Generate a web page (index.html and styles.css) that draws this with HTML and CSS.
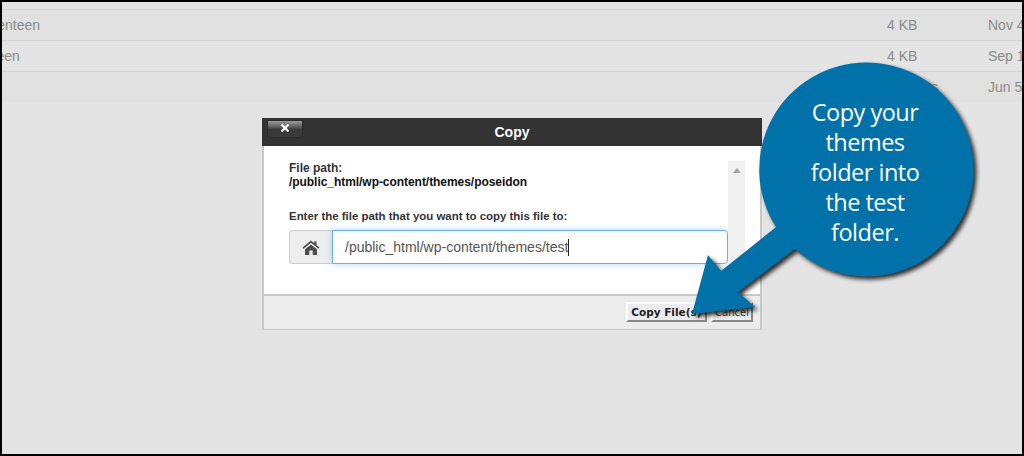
FILE: index.html
```html
<!DOCTYPE html>
<html lang="en">
<head>
<meta charset="utf-8">
<title>Copy</title>
<link rel="stylesheet" href="styles.css">
</head>
<body>
<div class="frame">
  <div class="table">
    <div class="row row-sliver"></div>
    <div class="row row-dark">
      <div class="name">twentyseventeen</div>
      <div class="size">4 KB</div>
      <div class="date">Nov 4</div>
    </div>
    <div class="row">
      <div class="name">twentysixteen</div>
      <div class="size">4 KB</div>
      <div class="date">Sep 1</div>
    </div>
    <div class="row row-dark row-last">
      <div class="name"></div>
      <div class="size size-bytes">4 bytes</div>
      <div class="date">Jun 5</div>
    </div>
  </div>
  <div class="dialog-wrap">
    <div class="dialog">
      <header class="dialog-head">
        <button class="close" type="button">
          <svg width="10" height="8" viewBox="0 0 10 8"><path d="M1.500 0.500L8.500 7.500M8.500 0.500L1.500 7.500" stroke="#fff" stroke-width="2.200" fill="none"/></svg>
        </button>
        <h1 class="dialog-title">Copy</h1>
      </header>
      <div class="dialog-body">
        <div class="body-main">
          <p class="path-label">File path:</p>
          <p class="path-value">/public_html/wp-content/themes/poseidon</p>
          <p class="enter-label">Enter the file path that you want to copy this file to:</p>
          <div class="input-group">
            <span class="addon">
              <svg width="18" height="15" viewBox="0 0 18 15"><path d="M9 0.500L0.500 7.500L1.500 8.800L9 2.800L16.500 8.800L17.500 7.500L14.500 5V1.200H12.300V3.200ZM3 9.300V15H7.300V10.500H10.700V15H15V9.300L9 4.400Z" fill="#4d4d4d"/></svg>
            </span>
            <div class="field">/public_html/wp-content/themes/test<i class="caret"></i></div>
          </div>
        </div>
        <div class="scrollbar"><span class="scroll-up"></span></div>
      </div>
      <footer class="dialog-foot">
        <button class="btn" type="button">Copy File(s)</button>
        <button class="btn btn-cancel" type="button">Cancel</button>
      </footer>
    </div>
  </div>
  <div class="callout">
    <svg class="callout-art" width="310" height="280" viewBox="680 55 310 280">
      <path d="M865.700 62.500A107 107 0 1 1 795 249L738 292L755 307L692 314L708 255L721 271L776 227A107 107 0 0 1 865.700 62.500Z" fill="#0071a9"/>
    </svg>
    <p class="callout-text">Copy your<br>themes<br>folder into<br>the test<br>folder.</p>
  </div>
</div>
</body>
</html>
```
FILE: styles.css
```css
* { box-sizing: border-box; }
html, body { margin: 0; padding: 0; }
body { width: 1024px; height: 456px; overflow: hidden; background: #000; font-family: "Liberation Sans", Arial, sans-serif; }
.frame { position: relative; width: 1020px; height: 452px; margin: 2px; background: #e4e4e4; overflow: hidden; }
.table { display: flex; flex-direction: column; }
.row { display: flex; height: 31px; padding-top: 5px; border-bottom: 1px solid #d4d4d4; font-size: 14px; line-height: 20px; color: #8a8a8a; }
.row-sliver { height: 8px; padding: 0; }
.row-dark { background: #e1e1e1; }
.row-last { border-bottom: 0; height: 30px; }
.name { width: 952px; margin-left: -67px; flex: none; white-space: nowrap; }
.size { width: 101px; flex: none; white-space: nowrap; }
.size-bytes { padding-left: 6px; }
.date { white-space: nowrap; }
.dialog-wrap { display: flex; justify-content: center; padding-top: 16px; }
.dialog { width: 500px; height: 212px; display: flex; flex-direction: column; border: 2px solid #c8c8c8; border-top: 0; background: #fff; }
.dialog-head { position: relative; height: 28px; margin: 0 -2px; background: #333; display: flex; align-items: center; justify-content: center; flex: none; }
.dialog-title { margin: 0; font-size: 14px; font-weight: bold; color: #fff; line-height: 28px; }
.close { position: absolute; left: 6px; top: 3px; width: 34px; height: 16px; padding: 3px 0 0; border: 0; border-radius: 0 0 4px 4px; background: linear-gradient(#9a9a9a, #5a5a5a 40%, #3a3a3a 50%, #3a3a3a); box-shadow: 0 0 0 1px #2a2a2a; display: flex; align-items: flex-start; justify-content: center; }
.dialog-body { flex: 1; display: flex; padding: 15px 15px 0 25px; }
.body-main { width: 439px; flex: none; }
.path-label, .path-value, .enter-label { margin: 0; font-size: 12px; line-height: 14px; font-weight: bold; }
.path-label { color: #333; }
.path-value { color: #111; letter-spacing: -.05px; }
.enter-label { color: #333; margin-top: 20px; font-size: 11.450px; }
.input-group { display: flex; height: 34px; margin-top: 7px; }
.addon { width: 43px; flex: none; display: flex; align-items: center; justify-content: center; background: #eee; border: 1px solid #ccc; border-right: 0; border-radius: 4px 0 0 4px; }
.field { flex: 1; display: flex; align-items: center; padding-left: 12px; font-size: 14px; color: #555; border: 1px solid #66afe9; border-radius: 0 4px 4px 0; background: #fff; box-shadow: 0 0 6px rgba(102, 175, 233, .5); }
.caret { display: block; width: 1px; height: 17px; background: #222; }
.scrollbar { width: 17px; height: 133px; flex: none; background: #f1f1f1; display: flex; justify-content: center; padding-top: 7px; }
.scroll-up { width: 0; height: 0; border-left: 4px solid transparent; border-right: 4px solid transparent; border-bottom: 5px solid #a3a3a3; }
.dialog-foot { height: 35px; flex: none; background: #ececec; border-top: 2px solid #c8c8c8; display: flex; justify-content: flex-end; align-items: flex-start; gap: 4px; padding: 6px 7px 0 0; }
.btn { height: 20px; padding: 0 3.500px; font-family: "DejaVu Sans", sans-serif; font-size: 10.500px; font-weight: bold; color: #222; background: #ececec; border: 2px solid; border-color: #fff #888 #888 #fff; white-space: nowrap; }
.btn-cancel { font-weight: normal; width: 42px; font-size: 10px; color: #333; padding: 0; }
.callout { position: absolute; left: 0; top: 0; width: 100%; height: 100%; pointer-events: none; }
.callout-art { position: absolute; left: 678px; top: 53px; overflow: visible; filter: drop-shadow(3px 3px 2px rgba(0, 0, 0, .8)); }
.callout-text { position: absolute; left: 763px; top: 95px; width: 200px; margin: 0; text-align: center; font-family: "Open Sans", sans-serif; font-size: 23.500px; line-height: 30px; color: #fff; letter-spacing: -.5px; }
```
